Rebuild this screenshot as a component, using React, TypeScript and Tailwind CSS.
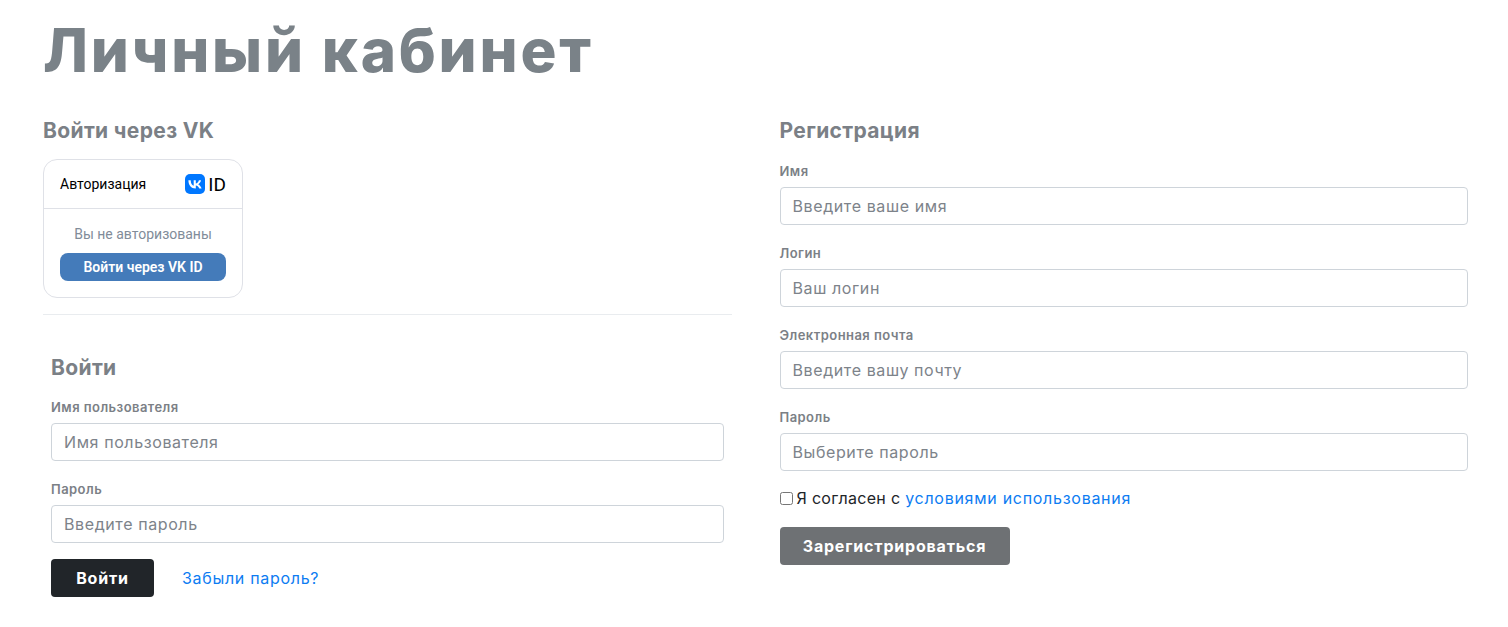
function Field({ label, placeholder }: { label: string; placeholder: string }) {
  return (
    <div className="mb-[20px]">
      <label className="block h-[18px] mb-[6px] text-[13px] leading-[17px] font-semibold text-[#7b8086] tracking-[0.45px]">
        {label}
      </label>
      <input
        type="text"
        placeholder={placeholder}
        className="block w-full h-[38px] px-[12px] bg-white border border-[#ced4da] rounded-[4px] text-[16px] tracking-[0.6px] placeholder:text-[#7d838a] outline-none"
      />
    </div>
  );
}

function VkCard() {
  return (
    <div className="w-[200px] h-[139px] border border-[#dfe1e7] rounded-[14px] font-['Roboto',sans-serif]">
      <div className="h-[49px] flex items-center justify-between pl-[16px] pr-[16px] border-b border-[#dfe1e7]">
        <span className="text-[14px] text-black">Авторизация</span>
        <div className="flex items-center gap-[3px] -ml-[1px]">
          <svg width="20" height="20" viewBox="0 0 20 20">
            <rect width="20" height="20" rx="5" fill="#0077ff" />
            <path
              d="M10.6 14.4C6.1 14.4 3.5 11.3 3.4 6.2H5.7C5.8 9.9 7.4 11.5 8.7 11.8V6.2H10.8V9.4C12.1 9.3 13.5 7.8 13.9 6.2H16C15.7 8.2 14.2 9.6 13.1 10.2C14.2 10.7 15.9 12.1 16.6 14.4H14.3C13.8 12.8 12.5 11.6 10.8 11.4V14.4H10.6Z"
              fill="#fff"
            />
          </svg>
          <span className="text-[19px] leading-none text-black">ID</span>
        </div>
      </div>
      <div className="px-[16px] pt-[16px] text-center">
        <p className="text-[14px] leading-[18px] text-[#818c99]">Вы не авторизованы</p>
        <button className="mt-[10px] w-full h-[28px] rounded-[8px] bg-[#447bba] text-white text-[14px] font-semibold">
          Войти через VK ID
        </button>
      </div>
    </div>
  );
}

export default function App() {
  return (
    <div className="font-['Inter','Noto_Sans',sans-serif] bg-white h-[627px] overflow-hidden pl-[43px] pr-[40px] text-[#6c757d]">
      <h1 className="h-[103px] pt-[12px] text-[60px] leading-[76px] font-extrabold tracking-[2.8px] text-[#7a8288]">
        Личный кабинет
      </h1>

      <div className="grid grid-cols-2 gap-x-[48px]">
        <div>
          <h3 className="h-[24px] mt-[16px] mb-[16px] text-[21px] leading-[24px] font-bold tracking-[0.35px] text-[#7b8086]">
            Войти через VK
          </h3>
          <VkCard />
          <hr className="mt-[16px] border-[#e9ecef]" />

          <div className="px-[8px] pt-[41px]">
            <h3 className="h-[24px] mb-[19px] text-[21px] leading-[24px] font-bold tracking-[0.35px] text-[#7b8086]">
              Войти
            </h3>
            <Field label="Имя пользователя" placeholder="Имя пользователя" />
            <Field label="Пароль" placeholder="Введите пароль" />
            <div className="flex items-center gap-[28px] -mt-[4px]">
              <button className="w-[103px] h-[38px] rounded-[4px] bg-[#212529] text-white text-[16px] tracking-[0.8px] font-bold">
                Войти
              </button>
              <a className="text-[16px] tracking-[0.7px] text-[#0d7cf2]">Забыли пароль?</a>
            </div>
          </div>
        </div>

        <div>
          <h3 className="h-[24px] mt-[16px] mb-[20px] text-[21px] leading-[24px] font-bold tracking-[0.35px] text-[#7b8086]">
            Регистрация
          </h3>
          <Field label="Имя" placeholder="Введите ваше имя" />
          <Field label="Логин" placeholder="Ваш логин" />
          <Field label="Электронная почта" placeholder="Введите вашу почту" />
          <Field label="Пароль" placeholder="Выберите пароль" />
          <div className="flex items-center h-[24px] -mt-[5px] mb-[17px] text-[16px] tracking-[0.3px] text-[#212529]">
            <input type="checkbox" className="w-[13px] h-[13px] mr-[4px]" />
            <span>
              Я согласен с <a className="tracking-[0.72px] text-[#0d7cf2]">условиями использования</a>
            </span>
          </div>
          <button className="w-[230px] h-[38px] rounded-[4px] bg-[#6e7174] text-white text-[16px] tracking-[0.8px] font-bold">
            Зарегистрироваться
          </button>
        </div>
      </div>
    </div>
  );
}
